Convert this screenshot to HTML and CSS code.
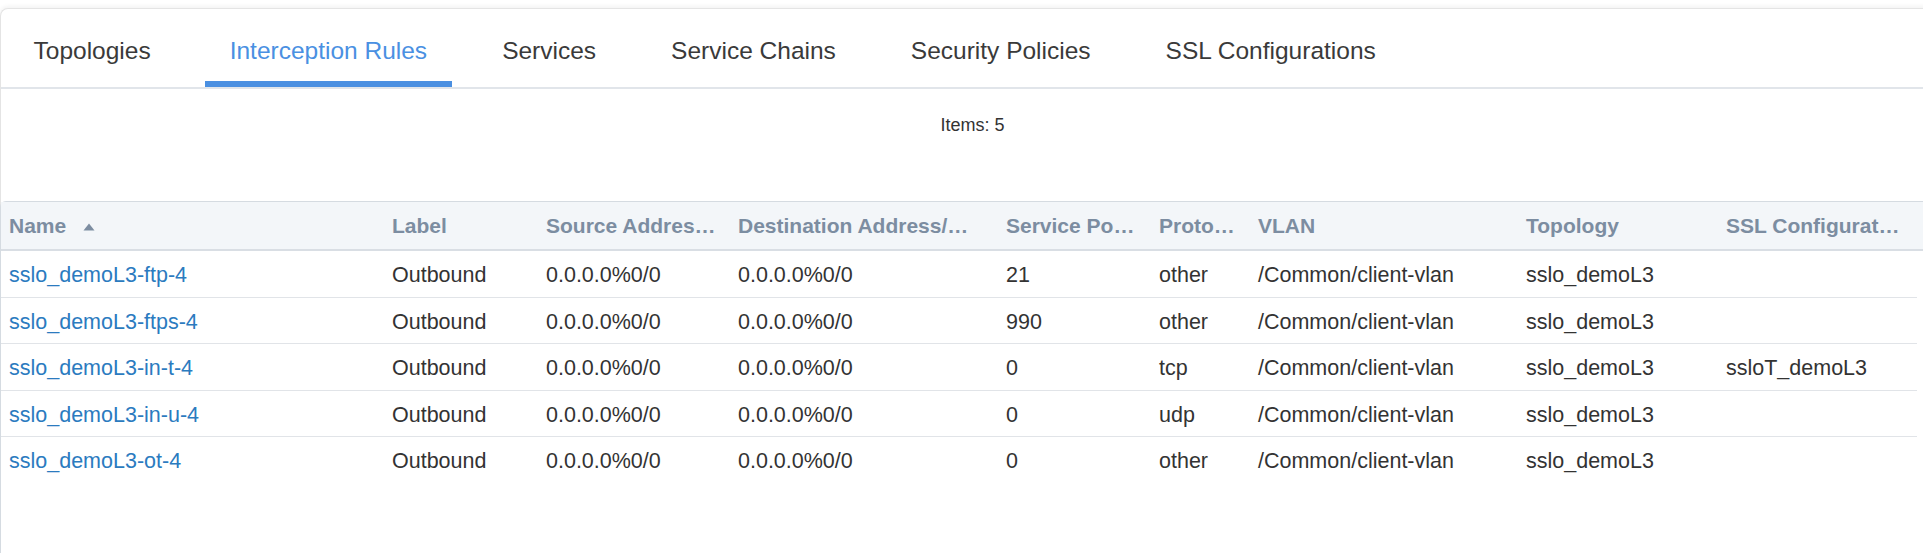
FILE: index.html
```html
<!DOCTYPE html>
<html lang="en">
<head>
<meta charset="utf-8">
<title>Interception Rules</title>
<link rel="stylesheet" href="styles.css">
</head>
<body>
<div class="card">
  <nav class="tabs">
    <a class="tab">Topologies</a>
    <a class="tab active">Interception Rules</a>
    <a class="tab">Services</a>
    <a class="tab">Service Chains</a>
    <a class="tab">Security Policies</a>
    <a class="tab">SSL Configurations</a>
  </nav>
  <div class="count">Items: 5</div>
  <div class="grid">
    <div class="row head">
      <div class="cell">Name<svg class="sort" viewBox="0 0 12 8" width="12" height="8"><path d="M6 0.5 L11.5 7.5 L0.5 7.5 Z" fill="#7c8da1"/></svg></div>
      <div class="cell">Label</div>
      <div class="cell">Source Address/Mask</div>
      <div class="cell">Destination Address/Mask</div>
      <div class="cell">Service Ports</div>
      <div class="cell">Protocol</div>
      <div class="cell">VLAN</div>
      <div class="cell">Topology</div>
      <div class="cell">SSL Configuration</div>
      <div class="cell"></div>
    </div>
    <div class="row body">
      <div class="cell"><a class="link">sslo_demoL3-ftp-4</a></div>
      <div class="cell">Outbound</div>
      <div class="cell">0.0.0.0%0/0</div>
      <div class="cell">0.0.0.0%0/0</div>
      <div class="cell">21</div>
      <div class="cell">other</div>
      <div class="cell">/Common/client-vlan</div>
      <div class="cell">sslo_demoL3</div>
      <div class="cell"></div>
    </div>
    <div class="row body">
      <div class="cell"><a class="link">sslo_demoL3-ftps-4</a></div>
      <div class="cell">Outbound</div>
      <div class="cell">0.0.0.0%0/0</div>
      <div class="cell">0.0.0.0%0/0</div>
      <div class="cell">990</div>
      <div class="cell">other</div>
      <div class="cell">/Common/client-vlan</div>
      <div class="cell">sslo_demoL3</div>
      <div class="cell"></div>
    </div>
    <div class="row body">
      <div class="cell"><a class="link">sslo_demoL3-in-t-4</a></div>
      <div class="cell">Outbound</div>
      <div class="cell">0.0.0.0%0/0</div>
      <div class="cell">0.0.0.0%0/0</div>
      <div class="cell">0</div>
      <div class="cell">tcp</div>
      <div class="cell">/Common/client-vlan</div>
      <div class="cell">sslo_demoL3</div>
      <div class="cell">ssloT_demoL3</div>
    </div>
    <div class="row body">
      <div class="cell"><a class="link">sslo_demoL3-in-u-4</a></div>
      <div class="cell">Outbound</div>
      <div class="cell">0.0.0.0%0/0</div>
      <div class="cell">0.0.0.0%0/0</div>
      <div class="cell">0</div>
      <div class="cell">udp</div>
      <div class="cell">/Common/client-vlan</div>
      <div class="cell">sslo_demoL3</div>
      <div class="cell"></div>
    </div>
    <div class="row body">
      <div class="cell"><a class="link">sslo_demoL3-ot-4</a></div>
      <div class="cell">Outbound</div>
      <div class="cell">0.0.0.0%0/0</div>
      <div class="cell">0.0.0.0%0/0</div>
      <div class="cell">0</div>
      <div class="cell">other</div>
      <div class="cell">/Common/client-vlan</div>
      <div class="cell">sslo_demoL3</div>
      <div class="cell"></div>
    </div>
  </div>
</div>
</body>
</html>
```
FILE: styles.css
```css
html, body {
  margin: 0;
  padding: 0;
  background: #ffffff;
  overflow: hidden;
}
body {
  font-family: "Liberation Sans", Arial, sans-serif;
  color: #333333;
}
.card {
  margin-top: 8px;
  width: calc(100% + 20px);
  min-height: 560px;
  border-top: 1px solid #e4e4e4;
  border-left: 1px solid #e4e4e4;
  border-top-left-radius: 8px;
  box-shadow: 0 -2px 4px rgba(0, 0, 0, 0.05);
  background: #fff;
}
.tabs {
  display: flex;
  gap: 26px;
  padding-left: 8px;
  height: 78px;
  border-bottom: 2px solid #e1e5ea;
  box-sizing: content-box;
}
.tab {
  display: block;
  padding: 14px 24.5px 0;
  line-height: 56px;
  font-size: 24.5px;
  color: #3a3a3a;
  border-bottom: 6px solid transparent;
  white-space: nowrap;
}
.tab:first-child {
  margin-right: 4px;
}
.tab.active {
  color: #4a90e2;
  border-bottom-color: #4a8fe1;
}
.count {
  padding-top: 26px;
  padding-left: 20px;
  line-height: 21px;
  font-size: 18px;
  text-align: center;
  color: #333;
  width: 1903px;
}
.grid {
  margin-top: 65px;
  margin-left: -1px;
  border-top: 1px solid #d5dbe1;
  border-left: 1px solid #d5dbe1;
  border-top-left-radius: 6px;
  min-height: 400px;
}
.row {
  display: grid;
  grid-template-columns: 383px 154px 192px 268px 153px 99px 268px 200px 198px 1fr;
}
.cell {
  padding: 0 13px 0 8px;
  white-space: nowrap;
  overflow: hidden;
  text-overflow: ellipsis;
  min-width: 0;
}
.head {
  height: 47px;
  line-height: 47px;
  background: #f3f6f9;
  border-bottom: 2px solid #d9dee4;
  font-size: 21px;
  font-weight: bold;
  color: #7c8da1;
}
.sort {
  margin-left: 17px;
  vertical-align: 2px;
}
.body {
  width: 1916px;
  padding-top: 4px;
  box-sizing: border-box;
  height: 46.5px;
  line-height: 41.5px;
  font-size: 21.5px;
  color: #333;
  border-bottom: 1px solid #e1e4e8;
}
.body:last-child {
  border-bottom: none;
}
.link {
  color: #2b7bbf;
  text-decoration: none;
}
```
